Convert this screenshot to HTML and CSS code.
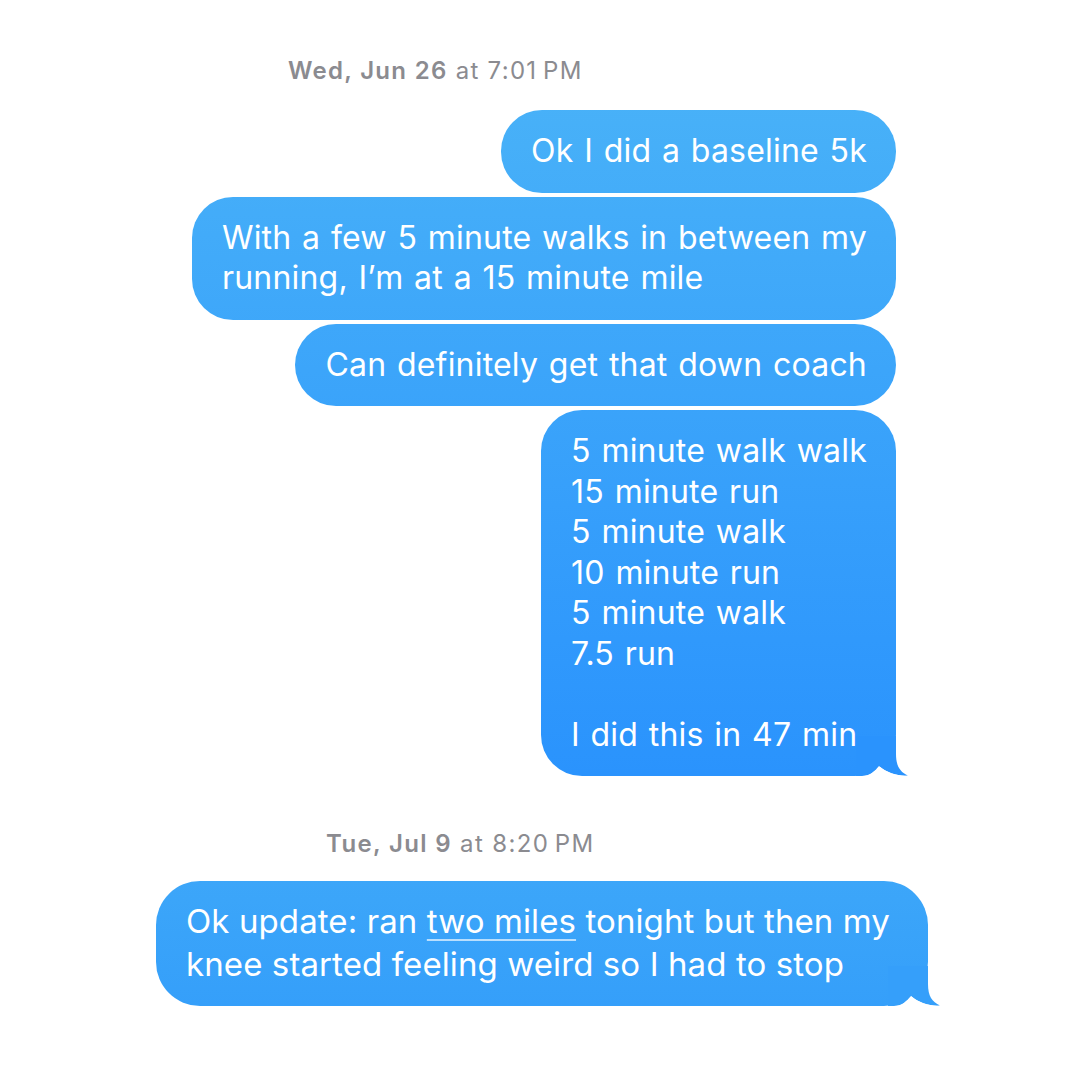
FILE: index.html
```html
<!DOCTYPE html>
<html lang="en">
<head>
  <meta charset="UTF-8" />
  <meta name="viewport" content="width=device-width, initial-scale=1.0"/>
  <title>Messages</title>
  <link rel="stylesheet" href="styles.css">
</head>
<body>
  <div class="thread">

    <!-- first day -->
    <div class="day day-one">
      <div class="stamp"><b>Wed, Jun 26</b> at 7:01&#8201;PM</div>

      <div class="messages">
        <div class="bubble">Ok I did a baseline 5k</div>
        <div class="bubble">With a few 5 minute walks in between my<br>running, I’m at a 15 minute mile</div>
        <div class="bubble">Can definitely get that down coach</div>
        <div class="bubble multi">5 minute walk walk
15 minute run
5 minute walk
10 minute run
5 minute walk
7.5 run

I did this in 47 min<svg class="tail" viewBox="0 0 52 40" width="52" height="40"><path fill="currentColor" d="M0 0H40V18C40 30 44 36 52 39.5C43 40.5 31 37 23 30C19 35 14 40 6 40H0Z"/><path fill="#fff" d="M6 40C14 40 19 35 23 30C31 37 43 40.5 52 39.5V40Z"/></svg></div>
      </div>
    </div>

    <!-- second day -->
    <div class="day day-two">
      <div class="stamp"><b>Tue, Jul 9</b> at 8:20&#8201;PM</div>

      <div class="messages">
        <div class="bubble">Ok update: ran <span class="link">two miles</span> tonight but then my<br>knee started feeling weird so I had to stop<svg class="tail" viewBox="0 0 52 40" width="52" height="40"><path fill="currentColor" d="M0 0H40V18C40 30 44 36 52 39.5C43 40.5 31 37 23 30C19 35 14 40 6 40H0Z"/><path fill="#fff" d="M6 40C14 40 19 35 23 30C31 37 43 40.5 52 39.5V40Z"/></svg></div>
      </div>
    </div>

  </div>
</body>
</html>
```

FILE: styles.css
```css
* {
  box-sizing: border-box;
  margin: 0;
  padding: 0;
}

body {
  font-family: Inter, "Noto Sans", sans-serif;
  background: #fff;
  color: #fff;
  width: 1080px;
  height: 1080px;
  overflow: hidden;
}

.thread {
  display: flex;
  flex-direction: column;
}

.stamp {
  font-size: 24px;
  line-height: 26px;
  letter-spacing: 1.3px;
  color: #8b8b90;
  font-weight: 400;
}

.stamp b {
  font-weight: 600;
}

.messages {
  display: flex;
  flex-direction: column;
  align-items: flex-end;
  gap: 4px;
}

.bubble {
  position: relative;
  font-size: 32px;
  line-height: 40.5px;
  letter-spacing: 0.2px;
  word-spacing: 1.5px;
  padding: 21px 29px 21px 30px;
  border-radius: 41px;
  background: linear-gradient(180deg, #48b1f8 100px, #2a93fd 775px) fixed;
}

.multi {
  white-space: pre-line;
}

.tail {
  position: absolute;
  right: -12px;
  bottom: 0;
  color: #2a93fd;
}

/* --- first screenshot --- */
.day-one {
  padding: 58px 184px 0 0;
}

.day-one .stamp {
  padding-left: 288px;
  margin-bottom: 26px;
}

/* --- second screenshot --- */
.day-two {
  padding: 55px 152px 0 0;
}

.day-two .stamp {
  padding-left: 326px;
  margin-bottom: 24px;
  letter-spacing: 1.35px;
}

.day-two .bubble {
  font-size: 33px;
  line-height: 43px;
  letter-spacing: 0.1px;
  word-spacing: 0;
  padding: 19px 38px 20px 30px;
  border-radius: 44px;
  background: linear-gradient(180deg, #3ca6f9, #359ffa);
}

.day-two .tail {
  color: #359ffa;
}

.link {
  text-decoration: underline;
  text-decoration-color: rgba(255, 255, 255, 0.65);
  text-decoration-thickness: 2px;
  text-underline-offset: 6px;
}
```
